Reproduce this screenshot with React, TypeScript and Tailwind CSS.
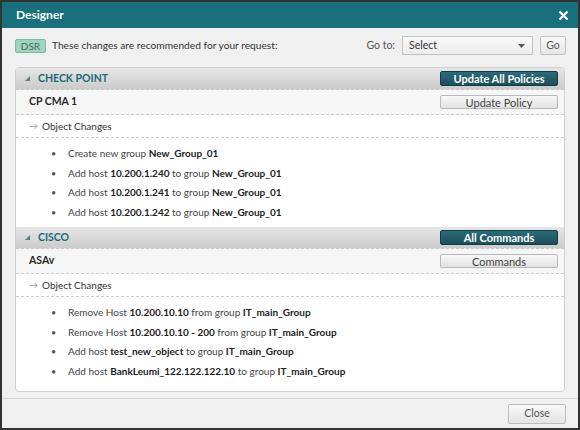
import React from "react";

type Item = { parts: [string, boolean][] };

const checkPointItems: Item[] = [
  { parts: [["Create new group ", false], ["New_Group_01", true]] },
  { parts: [["Add host ", false], ["10.200.1.240", true], [" to group ", false], ["New_Group_01", true]] },
  { parts: [["Add host ", false], ["10.200.1.241", true], [" to group ", false], ["New_Group_01", true]] },
  { parts: [["Add host ", false], ["10.200.1.242", true], [" to group ", false], ["New_Group_01", true]] },
];

const ciscoItems: Item[] = [
  { parts: [["Remove Host ", false], ["10.200.10.10", true], [" from group ", false], ["IT_main_Group", true]] },
  { parts: [["Remove Host ", false], ["10.200.10.10 - 200", true], [" from group ", false], ["IT_main_Group", true]] },
  { parts: [["Add host ", false], ["test_new_object", true], [" to group ", false], ["IT_main_Group", true]] },
  { parts: [["Add host ", false], ["BankLeumi_122.122.122.10", true], [" to group ", false], ["IT_main_Group", true]] },
];

function SectionHeader({ title, action }: { title: string; action: string }) {
  return (
    <div className="flex items-center justify-between h-[22px] pl-[9px] pr-[6px] bg-gradient-to-b from-[#e6e6e6] to-[#cbcbcb] border-b border-dashed border-[#c8c8c8]">
      <div className="flex items-center gap-[8px]">
        <svg width="5" height="5" viewBox="0 0 5 5">
          <path d="M5 0 L5 5 L0 5 Z" fill="#5a7f86" />
        </svg>
        <span className="text-[10.5px] font-bold text-[#1b6b76]">{title}</span>
      </div>
      <button className="w-[118px] h-[15px] rounded-[2px] border border-[#123c44] bg-gradient-to-b from-[#2a6b78] to-[#1c505b] text-white text-[11px] font-bold leading-none">
        {action}
      </button>
    </div>
  );
}

function Section({
  title,
  action,
  device,
  deviceAction,
  items,
}: {
  title: string;
  action: string;
  device: string;
  deviceAction: string;
  items: Item[];
}) {
  return (
    <div>
      <SectionHeader title={title} action={action} />
      <div className="flex items-center justify-between h-[25px] pl-[13px] pr-[6px] bg-[#f6f6f6] border-b border-dashed border-[#cdcdcd]">
        <span className="text-[10.5px] font-bold text-[#2a2a2a]">{device}</span>
        <button className="w-[118px] h-[14px] rounded-[2px] border border-[#b9b9b9] bg-gradient-to-b from-[#f8f8f8] to-[#e2e2e2] text-[11px] text-[#444] leading-none">
          {deviceAction}
        </button>
      </div>
      <div className="flex items-center h-[23px] pl-[13px] bg-white border-b border-dashed border-[#cdcdcd] text-[10px] text-[#333]">
        <span className="text-[#999] text-[9px] mr-[4px]">→</span>Object Changes
      </div>
      <ul className="pt-[6px] pb-[5px] bg-white">
        {items.map((it, i) => (
          <li key={i} className="flex items-center h-[19.5px] pl-[35px] text-[10px] text-[#444]">
            <span className="w-[17px] text-[#555] text-[9px]">•</span>
            <span>
              {it.parts.map(([t, b], j) =>
                b ? (
                  <b key={j} className="font-bold text-[#222]">
                    {t}
                  </b>
                ) : (
                  <span key={j} className="whitespace-pre">{t}</span>
                )
              )}
            </span>
          </li>
        ))}
      </ul>
    </div>
  );
}

export default function App() {
  return (
    <div
      className="w-[580px] h-[430px] flex flex-col border-2 border-[#333] bg-[#f0f0f0] overflow-hidden"
      style={{ fontFamily: "Lato, 'Open Sans', sans-serif" }}
    >
      {/* Title bar */}
      <div className="flex items-center justify-between h-[26px] bg-[#17707b] pl-[14px] pr-[9px] shrink-0">
        <span className="text-white font-bold text-[12px]">Designer</span>
        <svg width="11" height="11" viewBox="0 0 11 11">
          <path d="M1.5 1.5 L9.5 9.5 M9.5 1.5 L1.5 9.5" stroke="white" strokeWidth="2.2" />
        </svg>
      </div>

      {/* Recommendation row */}
      <div className="flex items-center h-[33px] pt-[2px] pl-[13px] pr-[12px] shrink-0">
        <span className="inline-flex items-center justify-center w-[31px] h-[14px] rounded-[2px] border border-[#7fb9a3] bg-[#9fd4bf] text-[10px] text-[#3f6f62] leading-none">
          DSR
        </span>
        <span className="ml-[6px] text-[10.2px] text-[#333]">These changes are recommended for your request:</span>
        <span className="ml-auto text-[10.5px] text-[#555]">Go to:</span>
        <div className="ml-[7px] flex items-center justify-between w-[131px] h-[19px] border border-[#c2c2c2] bg-gradient-to-b from-[#fafafa] to-[#ececec] pl-[6px] pr-[7px] text-[10.5px] text-[#333]">
          Select
          <svg width="7" height="4" viewBox="0 0 7 4">
            <path d="M0 0 L7 0 L3.5 4 Z" fill="#555" />
          </svg>
        </div>
        <button className="ml-[7px] w-[26px] h-[19px] border border-[#c2c2c2] rounded-[2px] bg-gradient-to-b from-[#fafafa] to-[#e6e6e6] text-[10.5px] text-[#555]">
          Go
        </button>
      </div>

      {/* Panel */}
      <div className="mx-[13px] mt-[6px] h-[325px] shrink-0 rounded-[4px] border border-[#cfcfcf] bg-white overflow-hidden">
        <Section
          title="CHECK POINT"
          action="Update All Policies"
          device="CP CMA 1"
          deviceAction="Update Policy"
          items={checkPointItems}
        />
        <Section
          title="CISCO"
          action="All Commands"
          device="ASAv"
          deviceAction="Commands"
          items={ciscoItems}
        />
      </div>

      {/* Footer */}
      <div className="mt-auto flex items-center justify-end h-[30px] border-t border-[#d6d6d6] pr-[12px] shrink-0">
        <button className="w-[58px] h-[20px] rounded-[2px] border border-[#bdbdbd] bg-gradient-to-b from-[#f8f8f8] to-[#e4e4e4] text-[10.5px] text-[#555]">
          Close
        </button>
      </div>
    </div>
  );
}
